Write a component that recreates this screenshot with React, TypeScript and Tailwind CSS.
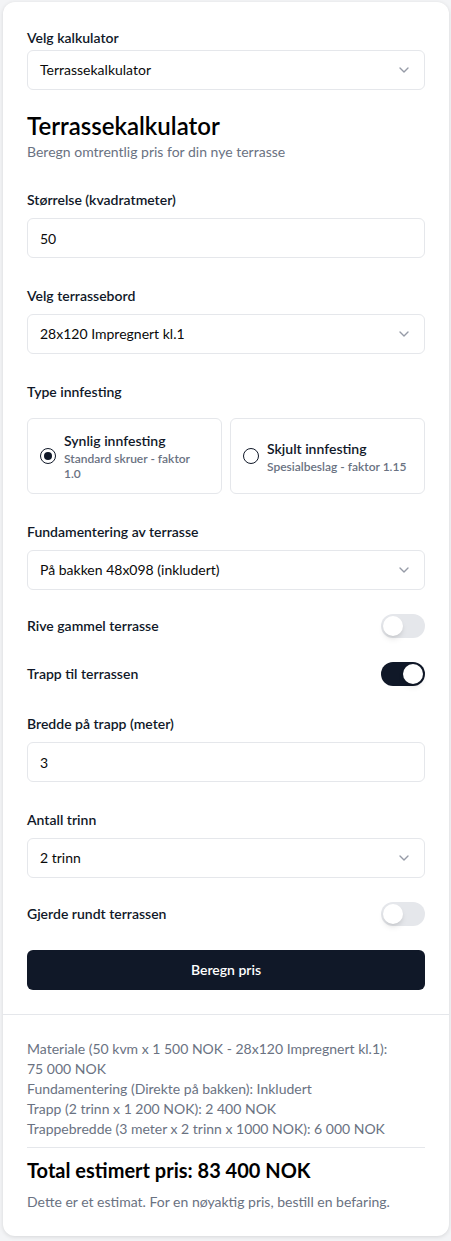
import React, { useState } from 'react';
import { ChevronDown } from 'lucide-react';

const FONT = { fontFamily: 'Lato, "Noto Sans", sans-serif' };

// nb-NO number formatting uses non-breaking spaces
const nok = (n: number) => n.toLocaleString('nb-NO').replace(/\s/g, '\u00a0') + '\u00a0NOK';

const SelectBox = ({ value }: { value: string }) => (
  <button
    type="button"
    className="flex h-10 w-full items-center justify-between rounded-md border border-gray-200 bg-white px-3 text-left text-sm text-[#0a0a0a]"
  >
    <span>{value}</span>
    <ChevronDown className="h-4 w-4 text-gray-500 opacity-70" />
  </button>
);

const TextInput = ({ value }: { value: string }) => (
  <input
    readOnly
    value={value}
    className="h-10 w-full rounded-md border border-gray-200 bg-white px-3 text-sm text-[#0a0a0a] outline-none"
  />
);

const Toggle = ({ on, onChange }: { on: boolean; onChange: () => void }) => (
  <button
    type="button"
    onClick={onChange}
    className={`flex h-6 w-11 shrink-0 items-center rounded-full p-0.5 transition-colors ${
      on ? 'bg-gray-900' : 'bg-gray-200'
    }`}
  >
    <span
      className={`h-5 w-5 rounded-full bg-white shadow-md transition-transform ${
        on ? 'translate-x-5' : 'translate-x-0'
      }`}
    />
  </button>
);

const Field = ({ label, children }: { label: string; children: React.ReactNode }) => (
  <div className="pt-1">
    <label className="mb-2 block text-sm font-semibold text-gray-900">{label}</label>
    {children}
  </div>
);

const ToggleRow = ({ label, on, onChange }: { label: string; on: boolean; onChange: () => void }) => (
  <div className="flex h-6 items-center justify-between">
    <span className="text-sm font-semibold text-gray-900">{label}</span>
    <Toggle on={on} onChange={onChange} />
  </div>
);

export default function App() {
  const [fastening, setFastening] = useState<'synlig' | 'skjult'>('synlig');
  const [rive, setRive] = useState(false);
  const [trapp, setTrapp] = useState(true);
  const [gjerde, setGjerde] = useState(false);

  const options = [
    { id: 'synlig', title: 'Synlig innfesting', desc: 'Standard skruer - faktor 1.0' },
    { id: 'skjult', title: 'Skjult innfesting', desc: 'Spesialbeslag - faktor 1.15' },
  ] as const;

  return (
    <div className="min-h-screen bg-gray-100 pt-0.5 pb-1" style={FONT}>
      <div className="ml-[3px] w-[446px] rounded-xl bg-white shadow-[0_1px_4px_rgba(0,0,0,0.12)]">
        <div className="px-6 pt-[26px] pb-6">
          <label className="mb-0.5 block text-sm font-semibold text-gray-900">Velg kalkulator</label>
          <SelectBox value="Terrassekalkulator" />

          <h1 className="mt-5 text-2xl leading-8 font-semibold text-black">Terrassekalkulator</h1>
          <p className="text-sm text-gray-500">Beregn omtrentlig pris for din nye terrasse</p>

          <div className="mt-6 flex flex-col gap-6">
            <Field label="Størrelse (kvadratmeter)">
              <TextInput value="50" />
            </Field>

            <Field label="Velg terrassebord">
              <SelectBox value="28x120 Impregnert kl.1" />
            </Field>

            <div className="pt-1">
              <span className="mb-4 block text-sm font-semibold text-gray-900">Type innfesting</span>
              <div className="grid grid-cols-2 gap-2">
                {options.map((o) => (
                  <button
                    key={o.id}
                    type="button"
                    onClick={() => setFastening(o.id)}
                    className="flex h-[76px] items-center gap-2 rounded-md border border-gray-200 bg-white p-3 text-left"
                  >
                    <span className="flex h-4 w-4 shrink-0 items-center justify-center rounded-full border-[1.5px] border-gray-900">
                      {fastening === o.id && <span className="h-2 w-2 rounded-full bg-gray-900" />}
                    </span>
                    <span className="flex flex-col">
                      <span className="text-sm leading-5 font-semibold text-gray-900">{o.title}</span>
                      <span className="text-xs leading-[15px] font-semibold text-gray-500">{o.desc}</span>
                    </span>
                  </button>
                ))}
              </div>
            </div>

            <Field label="Fundamentering av terrasse">
              <SelectBox value="På bakken 48x098 (inkludert)" />
            </Field>

            <ToggleRow label="Rive gammel terrasse" on={rive} onChange={() => setRive(!rive)} />
            <ToggleRow label="Trapp til terrassen" on={trapp} onChange={() => setTrapp(!trapp)} />

            <Field label="Bredde på trapp (meter)">
              <TextInput value="3" />
            </Field>

            <Field label="Antall trinn">
              <SelectBox value="2 trinn" />
            </Field>

            <ToggleRow label="Gjerde rundt terrassen" on={gjerde} onChange={() => setGjerde(!gjerde)} />

            <button
              type="button"
              className="h-10 w-full rounded-md bg-gray-900 text-sm font-semibold text-white"
            >
              Beregn pris
            </button>
          </div>
        </div>

        <div className="border-t border-gray-200 px-6 pt-6 pb-6">
          <div className="text-sm leading-5 text-gray-500">
            <p>
              Materiale (50 kvm x {nok(1500)} - 28x120 Impregnert kl.1): {nok(75000)}
            </p>
            <p>Fundamentering (Direkte på bakken): Inkludert</p>
            <p>
              Trapp (2 trinn x {nok(1200)}): {nok(2400)}
            </p>
            <p>Trappebredde (3 meter x 2 trinn x 1000 NOK): {nok(6000)}</p>
          </div>
          <div className="mt-2 border-t border-gray-200 pt-2">
            <p className="text-xl leading-7 font-bold text-black">Total estimert pris: {nok(83400)}</p>
            <p className="mt-2 text-sm text-gray-500">Dette er et estimat. For en nøyaktig pris, bestill en befaring.</p>
          </div>
        </div>
      </div>
    </div>
  );
}
